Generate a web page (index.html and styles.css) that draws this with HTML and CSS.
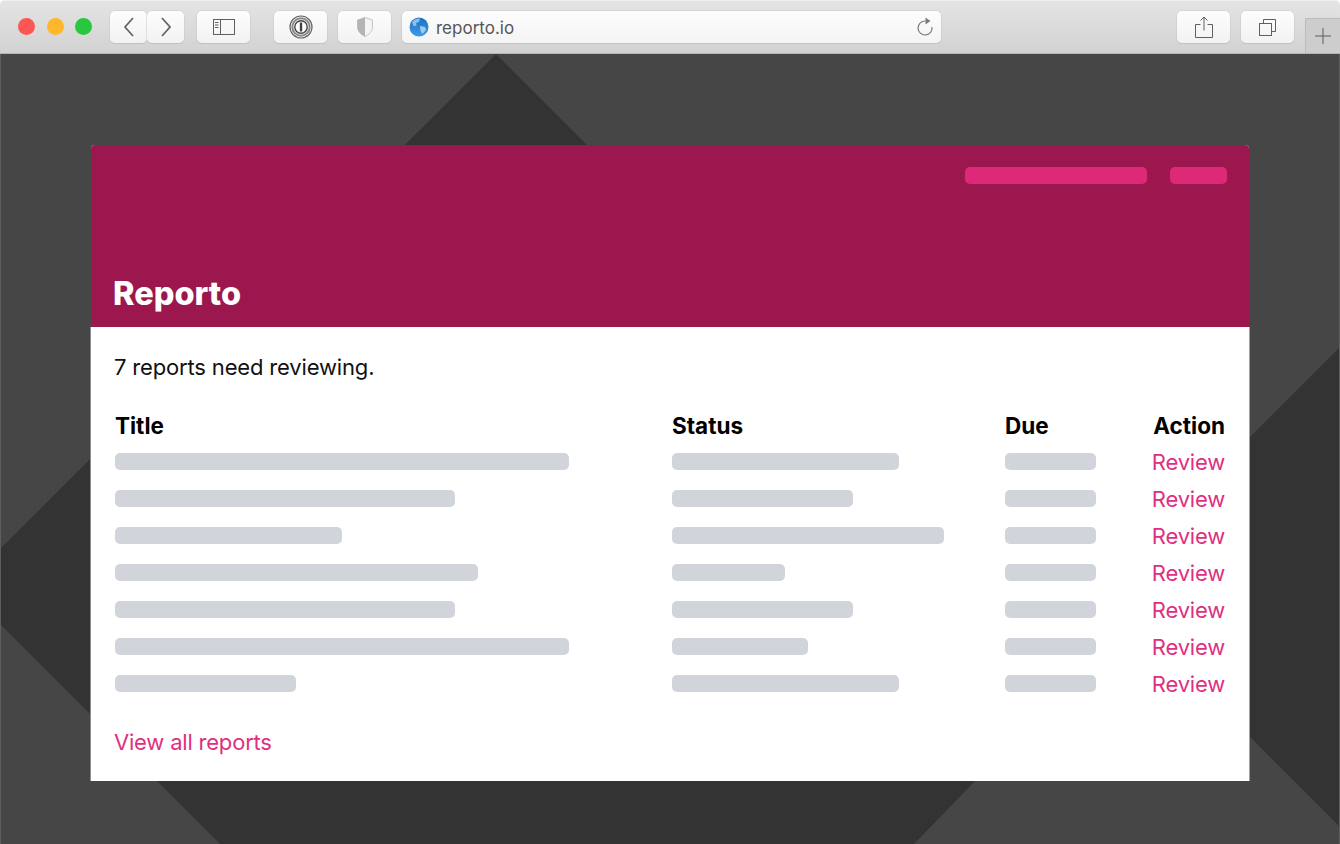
FILE: index.html
```html
<!DOCTYPE html>
<html lang="en">
<head>
    <meta charset="UTF-8">
    <meta name="viewport" content="width=device-width, initial-scale=1.0">
    <title>Reporto</title>
    <link rel="stylesheet" href="styles.css">
</head>
<body>
<div class="window">
    <div class="toolbar">
        <div class="lights">
            <span class="light red"></span>
            <span class="light yellow"></span>
            <span class="light green"></span>
        </div>
        <div class="nav-pair">
            <div class="tool back">
                <svg width="14" height="22" viewBox="0 0 14 22"><path d="M11 2 L3 11 L11 20" class="ic"/></svg>
            </div>
            <div class="tool forward">
                <svg width="14" height="22" viewBox="0 0 14 22"><path d="M3 2 L11 11 L3 20" class="ic"/></svg>
            </div>
        </div>
        <div class="tool wide sidebar">
            <svg width="22" height="16" viewBox="0 0 22 16">
                <rect x="0.5" y="0.5" width="21" height="15" class="ic-thin"/>
                <path d="M7.5 0.5 V15.5" class="ic-thin"/>
                <path d="M2 3.5 H5.5 M2 6 H5.5 M2 8.5 H5.5" class="ic-thin"/>
            </svg>
        </div>
        <div class="tool wide onepass">
            <svg width="24" height="24" viewBox="0 0 24 24">
                <circle cx="12" cy="12" r="11" fill="none" stroke="#666" stroke-width="1.2"/>
                <circle cx="12" cy="12" r="8.7" fill="none" stroke="#888" stroke-width="2"/>
                <circle cx="12" cy="12" r="6.2" fill="#fff" stroke="#444" stroke-width="1.4"/>
                <rect x="10.8" y="7.5" width="2.4" height="9" fill="#444"/>
            </svg>
        </div>
        <div class="tool wide shield">
            <svg width="16" height="20" viewBox="0 0 16 20">
                <path d="M8 0.5 L15.5 3 V10 C15.5 14.5 12 17.5 8 19.5 C4 17.5 0.5 14.5 0.5 10 V3 Z" fill="#f4f4f4" stroke="#c4c4c4"/>
                <path d="M8 0.5 L0.5 3 V10 C0.5 14.5 4 17.5 8 19.5 Z" fill="#b4b4b4"/>
            </svg>
        </div>
        <div class="address">
            <svg class="globe" width="20" height="20" viewBox="0 0 20 20">
                <defs>
                    <linearGradient id="globe-fill" x1="0" y1="0" x2="0" y2="1">
                        <stop offset="0" stop-color="#1c6fc0"/>
                        <stop offset="1" stop-color="#3f9ae6"/>
                    </linearGradient>
                </defs>
                <circle cx="10" cy="10" r="9.5" fill="url(#globe-fill)"/>
                <path d="M3 5 C5 2 9 1 11 1.5 L10 5 L7 6 L7.5 9 L4.5 9 Z" fill="#8cc0ea"/>
                <path d="M11 9 L16 10 L17 13 L13.5 17 L11.5 14 Z" fill="#9ccbef"/>
            </svg>
            <span class="url">reporto.io</span>
            <svg class="reload" width="18" height="20" viewBox="0 0 18 20">
                <path d="M9.5 4 A7 7 0 1 0 16 10" fill="none" stroke="#7a7a7a" stroke-width="1.2"/>
                <path d="M9.5 0.5 L14.5 4 L9.5 7.5 Z" fill="#7a7a7a"/>
            </svg>
        </div>
        <div class="tool wide share">
            <svg width="18" height="22" viewBox="0 0 18 22">
                <path d="M5.5 8.5 H0.5 V21.5 H17.5 V8.5 H12.5" class="ic-thin"/>
                <path d="M9 14.5 V1 M5.5 4.5 L9 1 L12.5 4.5" class="ic-thin"/>
            </svg>
        </div>
        <div class="tool wide tabs">
            <svg width="17" height="17" viewBox="0 0 17 17">
                <rect x="0.5" y="4.5" width="12" height="12" class="ic-thin"/>
                <path d="M4.5 4.5 V0.5 H16.5 V12.5 H12.5" class="ic-thin"/>
            </svg>
        </div>
        <div class="new-tab">
            <svg width="16" height="16" viewBox="0 0 16 16"><path d="M8 0 V16 M0 8 H16" class="ic-thin"/></svg>
        </div>
    </div>

    <div class="stage">
        <svg class="backdrop" width="1340" height="790" viewBox="0 54 1340 790">
            <polygon points="496,54 587,145 1250,437 1340,347 1340,827 1250,737 975,781 914,844 220,844 0,624 0,549"/>
        </svg>
        <div class="card">
            <header class="card-head">
                <div class="head-links">
                    <span class="head-bar long"></span>
                    <span class="head-bar short"></span>
                </div>
                <h1>Reporto</h1>
            </header>
            <main class="card-body">
                <p class="intro">7 reports need reviewing.</p>
                <table>
                    <thead>
                        <tr>
                            <th class="col-title">Title</th>
                            <th class="col-status">Status</th>
                            <th class="col-due">Due</th>
                            <th class="col-action">Action</th>
                        </tr>
                    </thead>
                    <tbody>
                        <tr>
                            <td><div class="bar w-20"></div></td>
                            <td><div class="bar w-10"></div></td>
                            <td><div class="bar w-4"></div></td>
                            <td class="col-action"><a href="#">Review</a></td>
                        </tr>
                        <tr>
                            <td><div class="bar w-15"></div></td>
                            <td><div class="bar w-8"></div></td>
                            <td><div class="bar w-4"></div></td>
                            <td class="col-action"><a href="#">Review</a></td>
                        </tr>
                        <tr>
                            <td><div class="bar w-10"></div></td>
                            <td><div class="bar w-12"></div></td>
                            <td><div class="bar w-4"></div></td>
                            <td class="col-action"><a href="#">Review</a></td>
                        </tr>
                        <tr>
                            <td><div class="bar w-16"></div></td>
                            <td><div class="bar w-5"></div></td>
                            <td><div class="bar w-4"></div></td>
                            <td class="col-action"><a href="#">Review</a></td>
                        </tr>
                        <tr>
                            <td><div class="bar w-15"></div></td>
                            <td><div class="bar w-8"></div></td>
                            <td><div class="bar w-4"></div></td>
                            <td class="col-action"><a href="#">Review</a></td>
                        </tr>
                        <tr>
                            <td><div class="bar w-20"></div></td>
                            <td><div class="bar w-6"></div></td>
                            <td><div class="bar w-4"></div></td>
                            <td class="col-action"><a href="#">Review</a></td>
                        </tr>
                        <tr>
                            <td><div class="bar w-8"></div></td>
                            <td><div class="bar w-10"></div></td>
                            <td><div class="bar w-4"></div></td>
                            <td class="col-action"><a href="#">Review</a></td>
                        </tr>
                    </tbody>
                </table>
                <a class="view-all" href="#">View all reports</a>
            </main>
        </div>
    </div>
</div>
</body>
</html>
```

FILE: styles.css
```css
body {
    font-family: Inter, "Liberation Sans", sans-serif;
    margin: 0;
    padding: 0;
    background-color: #fff;
}
.window {
    display: flex;
    flex-direction: column;
    height: 844px;
    overflow: hidden;
    border-radius: 5px 5px 0 0;
}

/* barra do browser */
.toolbar {
    display: flex;
    align-items: flex-start;
    height: 54px;
    box-sizing: border-box;
    padding: 10px 0 0 18px;
    background: linear-gradient(#e4e4e4, #d2d2d2);
    border-top: 1px solid #efefef;
    border-bottom: 1px solid #b4b4b4;
}
.lights {
    display: flex;
    gap: 11.5px;
    padding-top: 7px;
    width: 92px;
}
.light {
    width: 17px;
    height: 17px;
    border-radius: 50%;
}
.red { background-color: #fd5655; }
.yellow { background-color: #fdb72b; }
.green { background-color: #27c83f; }
.nav-pair {
    display: flex;
    margin-right: 13px;
}
.tool {
    display: flex;
    align-items: center;
    justify-content: center;
    width: 37px;
    height: 32px;
    box-sizing: border-box;
    background: linear-gradient(#fdfdfd, #f2f2f2);
    border-radius: 5px;
    box-shadow: 0 0 0 0.5px #c8c8c8, 0 1px 0 #bdbdbd;
}
.wide {
    width: 53px;
    margin-right: 11px;
}
.sidebar { margin-right: 24px; }
.ic {
    fill: none;
    stroke: #666;
    stroke-width: 1.8;
}
.ic-thin {
    fill: none;
    stroke: #5f5f5f;
    stroke-width: 1;
}
.address {
    display: flex;
    align-items: center;
    width: 539px;
    height: 32px;
    box-sizing: border-box;
    padding: 0 7px;
    margin-right: 236px;
    background: linear-gradient(#fdfdfd, #f4f4f4);
    border-radius: 5px;
    box-shadow: 0 0 0 0.5px #c8c8c8, 0 1px 0 #bdbdbd;
}
.url {
    flex: 1;
    margin-left: 7px;
    padding-top: 2px;
    font-size: 17px;
    color: #555;
}
.new-tab {
    display: flex;
    align-items: center;
    justify-content: center;
    width: 35px;
    height: 35px;
    margin-top: 7px;
    background-color: #cdcdcd;
    border-left: 1px solid #bcbcbc;
    border-top: 1px solid #bcbcbc;
    box-sizing: border-box;
}

/* fundo e cartao */
.stage {
    position: relative;
    flex: 1;
    padding: 91px 91px 0 91px;
    background-color: #464646;
}
.stage::after {
    content: "";
    position: absolute;
    top: 0;
    right: 0;
    bottom: 0;
    left: 0;
    box-shadow: inset 1px 0 0 #5e5e5e, inset -1px 0 0 #5e5e5e;
}
.backdrop {
    position: absolute;
    left: 0;
    top: 0;
    fill: #333;
}
.card {
    position: relative;
    width: 1158px;
    background-color: #fff;
    border-radius: 4px 4px 0 0;
}
.card-head {
    display: flex;
    flex-direction: column;
    justify-content: space-between;
    height: 182px;
    box-sizing: border-box;
    padding: 22px 22px 13px 22px;
    background-color: #9c174d;
    border-radius: 4px 4px 0 0;
}
.head-links {
    display: flex;
    justify-content: flex-end;
    gap: 23px;
}
.head-bar {
    display: block;
    height: 17px;
    background-color: #dc2a79;
    border-radius: 5px;
}
.head-bar.long {
    width: 182px;
}
.head-bar.short {
    width: 57px;
}
h1 {
    margin: 0;
    font-size: 32.5px;
    line-height: 40px;
    font-weight: 800;
    color: #fff;
}
.card-body {
    padding: 22px 24px 21px 23px;
    box-shadow: -1px 0 0 #8f8f8f, 1px 0 0 #a0a0a0;
}
.intro {
    margin: 0 0 21px;
    font-size: 22px;
    letter-spacing: -0.16px;
    line-height: 37px;
    color: #111;
}
table {
    width: calc(100% - 1px);
    margin: 0 0 21px 1px;
    border-collapse: collapse;
    table-layout: fixed;
}
table th, table td {
    padding: 0;
    height: 37px;
    text-align: left;
}
table th {
    height: 36px;
    font-size: 22.5px;
    font-weight: 700;
    color: #000;
}
.col-title { width: 557px; }
.col-status { width: 333px; }
.col-due { width: 100px; }
table .col-action {
    text-align: right;
}
.bar {
    height: 17px;
    background-color: #d1d5db;
    border-radius: 5px;
}
.w-4 { width: 91px; }
.w-5 { width: 113px; }
.w-6 { width: 136px; }
.w-8 { width: 181px; }
.w-10 { width: 227px; }
.w-12 { width: 272px; }
.w-15 { width: 340px; }
.w-16 { width: 363px; }
.w-20 { width: 454px; }
a {
    display: block;
    padding-top: 2px;
    text-decoration: none;
    color: #de3080;
    font-size: 22px;
    letter-spacing: -0.2px;
    line-height: 35px;
}
```
